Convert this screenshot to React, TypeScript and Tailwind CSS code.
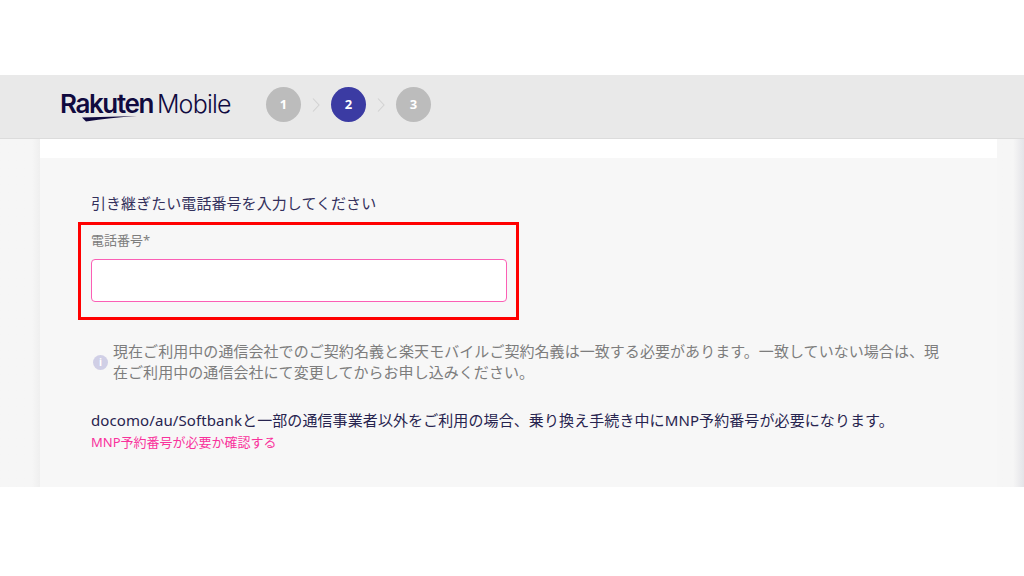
const jp = { fontFamily: '"Noto Sans","Noto Sans CJK JP",sans-serif' };

function Logo() {
  return (
    <div className="relative w-[171px] h-[36px] text-[#100a3f]">
      <div className="flex items-baseline leading-none pt-[4px] whitespace-nowrap" style={{ fontFamily: 'Inter, sans-serif' }}>
        <span className="text-[26px] font-semibold tracking-[-1.4px]">Rakuten</span>
        <span className="text-[25px] font-light tracking-[-0.8px] ml-[4px]">Mobile</span>
      </div>
      <svg className="absolute left-[22px] top-[29px]" width="55" height="6" viewBox="0 0 55 6">
        <path d="M0 1.5 L55 0 Q28 1.5 4 5.5 Z" fill="#100a3f" />
      </svg>
    </div>
  );
}

function Step({ n, active }: { n: number; active?: boolean }) {
  return (
    <div className={`w-[35px] h-[35px] rounded-full flex items-center justify-center text-white text-[13px] font-bold ${active ? 'bg-[#3b3ba3]' : 'bg-[#bcbcbc]'}`}>
      {n}
    </div>
  );
}

function Chevron() {
  return (
    <svg width="8" height="16" viewBox="0 0 8 16" fill="none" stroke="#d2d2d2" strokeWidth="1.1">
      <path d="M1 1.5 L7 8 L1 14.5" />
    </svg>
  );
}

export default function App() {
  return (
    <div className="w-[1024px] h-[576px] bg-white flex flex-col overflow-hidden" style={jp}>
      <div className="h-[75px]" />
      <header className="h-[64px] bg-[#e9e9e9] border-b border-[#dcdcdc] flex items-center pl-[60px] pb-[4px]">
        <Logo />
        <div className="flex items-center ml-[35px] gap-[11px]">
          <Step n={1} />
          <Chevron />
          <Step n={2} active />
          <Chevron />
          <Step n={3} />
        </div>
      </header>
      <div className="h-[348px] bg-[#f5f5f5] flex">
        <div className="w-[40px] bg-gradient-to-r from-[#f6f6f6] from-80% to-[#efefef]" />
        <main className="w-[957px] bg-white flex flex-col">
          <div className="h-[19px]" />
          <div className="flex-1 bg-[#f7f7f7] pl-[51px] pt-[35px]">
            <p className="text-[15px] tracking-[0.06px] leading-[20px] text-[#33305c]">引き継ぎたい電話番号を入力してください</p>
            <div className="relative mt-[18px] w-[416px]">
              <label className="block text-[13px] leading-[18px] text-[#7d7d7d]">電話番号*</label>
              <input aria-label="電話番号" className="block mt-[10px] w-[416px] h-[43px] bg-white border border-[#fb5fb5] rounded-[4px] outline-none" />
              <div className="absolute left-[-13px] top-[-9px] w-[441px] h-[98px] border-[3px] border-[#ff0000]" />
            </div>
            <div className="flex items-center mt-[39px] w-[850px]">
              <span className="w-[15px] h-[15px] rounded-full bg-[#d0cfe6] text-white flex items-center justify-center text-[10px] font-bold shrink-0 ml-[2px] mr-[5px]">i</span>
              <p className="text-[15px] tracking-[0.055px] leading-[21px] text-[#7d7d7d]">現在ご利用中の通信会社でのご契約名義と楽天モバイルご契約名義は一致する必要があります。一致していない場合は、現在ご利用中の通信会社にて変更してからお申し込みください。</p>
            </div>
            <p className="mt-[26px] text-[15px] tracking-[0.095px] leading-[22px] text-[#27244f] whitespace-nowrap">docomo/au/Softbankと一部の通信事業者以外をご利用の場合、乗り換え手続き中にMNP予約番号が必要になります。</p>
            <a className="block mt-[2px] text-[13px] leading-[18px] text-[#f9329c]">MNP予約番号が必要か確認する</a>
          </div>
        </main>
        <div className="flex-1 bg-gradient-to-r from-[#f6f6f6] from-60% to-[#e4e4e8]" />
      </div>
    </div>
  );
}
